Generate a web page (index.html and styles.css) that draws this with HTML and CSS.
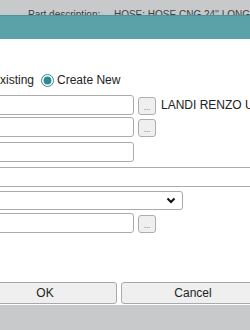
FILE: index.html
```html
<!DOCTYPE html>
<html lang="en">
<head>
    <meta charset="UTF-8">
    <meta name="viewport" content="width=device-width, initial-scale=1.0">
    <title>Supplier</title>
    <link rel="stylesheet" href="styles.css">
</head>
<body>
    <div class="page-line">
        <span class="page-label">Part description:</span>
        <span class="page-value">HOSE: HOSE CNG 24'' LONG</span>
    </div>

    <div class="dialog">
        <div class="dialog-header"></div>
        <div class="dialog-body">
            <div class="radio-row">
                <label><input type="radio" name="mode"> Existing</label>
                <label><input type="radio" name="mode" checked> Create New</label>
            </div>

            <div class="field-row row-1">
                <input type="text" class="text-input">
                <button class="pick-btn">...</button>
                <span class="pick-text">LANDI RENZO USA</span>
            </div>
            <div class="field-row row-2">
                <input type="text" class="text-input">
                <button class="pick-btn">...</button>
            </div>
            <div class="field-row row-3">
                <input type="text" class="text-input">
            </div>
            <div class="field-row row-4">
                <input type="text" class="text-input wide">
            </div>
            <div class="field-row row-5">
                <div class="select-wrap">
                    <select class="select-input">
                        <option></option>
                    </select>
                    <svg class="chevron" width="10" height="7" viewBox="0 0 10 7">
                        <path d="M1.5 1.5 L5 5 L8.5 1.5" fill="none" stroke="#111" stroke-width="2"/>
                    </svg>
                </div>
            </div>
            <div class="field-row row-6">
                <input type="text" class="text-input">
                <button class="pick-btn">...</button>
            </div>

            <div class="dialog-footer">
                <button class="footer-btn">OK</button>
                <button class="footer-btn">Cancel</button>
            </div>
        </div>
    </div>
</body>
</html>
```

FILE: styles.css
```css
body {
    font-family: "Liberation Sans", Arial, sans-serif;
    font-size: 12px;
    color: #222222;
    margin: 0;
    background-color: #c8c9ca;
    overflow: hidden;
}

/* page behind the overlay */
.page-line {
    height: 15px;
    overflow: hidden;
    box-sizing: border-box;
    padding: 9px 0 0 28px;
    line-height: 12px;
    font-size: 10px;
    color: #3c3d3e;
    display: flex;
    white-space: nowrap;
}
.page-label {
    width: 89px;
}

/* dialog */
.dialog {
    margin-left: -60px;
    width: 420px;
    background-color: #ffffff;
    box-shadow: 0 8px 10px rgba(0, 0, 0, 0.35);
}
.dialog-header {
    height: 24px;
    box-sizing: border-box;
    border-top: 1px solid #4596a0;
    background-color: #5ba1a8;
}
.dialog-body {
    padding: 33px 0 1px 31px;
}

.radio-row {
    display: flex;
    align-items: center;
    height: 16px;
    line-height: 16px;
}
.radio-row label {
    display: flex;
    align-items: center;
    margin-right: 2px;
}
.radio-row input {
    width: 13px;
    height: 13px;
    margin: 0 3px 0 5px;
    accent-color: #2f8990;
}

.field-row {
    display: flex;
    align-items: flex-start;
}
.row-1 { margin-top: 7px; }
.row-2 { margin-top: 2px; }
.row-3 { margin-top: 5px; }
.row-4 { margin-top: 5px; }
.row-5 { margin-top: 4px; }
.row-6 { margin-top: 3px; }

.text-input {
    width: 163px;
    height: 20px;
    box-sizing: border-box;
    margin: 0;
    border: 1px solid #ababab;
    border-radius: 3px;
    background-color: #ffffff;
    font: inherit;
}
.text-input.wide {
    width: 340px;
}

.pick-btn {
    width: 18px;
    height: 18px;
    box-sizing: border-box;
    margin: 2px 0 0 4px;
    padding: 4px 0 0 0;
    border: 1px solid #adadad;
    border-radius: 3px;
    background-color: #efefef;
    color: #555555;
    font-family: "Liberation Sans", Arial, sans-serif;
    font-size: 8px;
    line-height: 10px;
}
.pick-text {
    margin-left: 5px;
    line-height: 20px;
    white-space: nowrap;
}

.select-wrap {
    position: relative;
}
.select-input {
    appearance: none;
    width: 212px;
    height: 19px;
    margin: 0;
    border: 1px solid #ababab;
    border-radius: 3px;
    background-color: #ffffff;
    font: inherit;
}
.chevron {
    position: absolute;
    right: 7px;
    top: 6px;
}

.dialog-footer {
    display: flex;
    gap: 4px;
    margin: 49px 0 0 2px;
}
.footer-btn {
    width: 144px;
    height: 22px;
    margin: 0;
    border: 1px solid #a9a9a9;
    border-radius: 3px;
    background-color: #efefef;
    color: #222222;
    font-family: "Liberation Sans", Arial, sans-serif;
    font-size: 12px;
}
```
